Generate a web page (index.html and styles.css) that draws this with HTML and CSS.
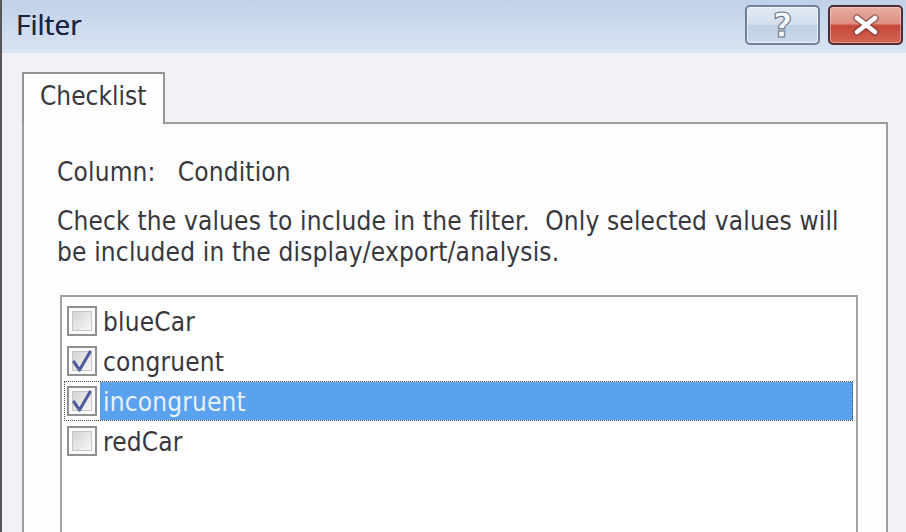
FILE: index.html
```html
<!DOCTYPE html>
<html>
<head>
<meta charset="utf-8">
<title>Filter</title>
<link rel="stylesheet" href="styles.css">
</head>
<body>
<div class="window">
  <div class="titlebar">
    <span class="title">Filter</span>
    <div class="caption-buttons">
      <div class="cbtn help"><span class="qmark">?</span></div>
      <div class="cbtn close">
        <svg width="36" height="24" viewBox="0 0 36 24">
          <path d="M9 5 L27 19 M27 5 L9 19" stroke="#5a3030" stroke-width="7.5" stroke-linecap="round" fill="none" opacity="0.5"/>
          <path d="M9 5 L27 19 M27 5 L9 19" stroke="#ffffff" stroke-width="4.6" stroke-linecap="round" fill="none"/>
        </svg>
      </div>
    </div>
  </div>
  <div class="client">
    <div class="tabstrip">
      <div class="tab">Checklist</div>
      <div class="tab-rest"></div>
    </div>
    <div class="panel">
      <div class="column-line"><span>Column:</span><span>Condition</span></div>
      <p class="hint">Check the values to include in the filter.&nbsp; Only selected values will<br>be included in the display/export/analysis.</p>
      <div class="listbox">
        <div class="item">
          <span class="cb"></span>
          <span class="label">blueCar</span>
        </div>
        <div class="item">
          <span class="cb"><svg class="tick" width="26" height="26" viewBox="0 0 26 26"><path d="M5 14 L10.5 22 L21 4" stroke="#4e5e9f" stroke-width="3.1" fill="none" stroke-linecap="round" stroke-linejoin="round"/></svg></span>
          <span class="label">congruent</span>
        </div>
        <div class="item focused">
          <span class="cb"><svg class="tick" width="26" height="26" viewBox="0 0 26 26"><path d="M5 14 L10.5 22 L21 4" stroke="#4e5e9f" stroke-width="3.1" fill="none" stroke-linecap="round" stroke-linejoin="round"/></svg></span>
          <span class="label selected">incongruent</span>
        </div>
        <div class="item">
          <span class="cb"></span>
          <span class="label">redCar</span>
        </div>
      </div>
    </div>
  </div>
</div>
</body>
</html>
```
FILE: styles.css
```css
html, body {
  margin: 0;
  padding: 0;
}

body {
  width: 906px;
  height: 532px;
  overflow: hidden;
  background: #f3f1f5;
  font-family: "DejaVu Sans Condensed", "DejaVu Sans", sans-serif;
  font-stretch: condensed;
  font-size: 26px;
  letter-spacing: 0.17px;
  color: #38383c;
}

.window {
  height: 532px;
  box-sizing: border-box;
  border-left: 2px solid #565656;
  display: flex;
  flex-direction: column;
}

.titlebar {
  height: 53px;
  flex: none;
  display: flex;
  align-items: flex-start;
  padding-left: 14px;
  background: linear-gradient(#c0d1e8, #d9e4f2);
}

.title {
  font-family: "Open Sans", "Noto Sans", sans-serif;
  font-stretch: normal;
  font-size: 28px;
  letter-spacing: 0;
  line-height: 48px;
  color: #1b2443;
  text-shadow: 0 0 0.5px #1b2443;
}

.caption-buttons {
  margin-left: auto;
  display: flex;
  gap: 8px;
  padding: 5px 3px 0 0;
}

.cbtn {
  width: 75px;
  height: 40px;
  box-sizing: border-box;
  border-radius: 5px;
  display: flex;
  align-items: center;
  justify-content: center;
}

.help {
  border: 2px solid #71809a;
  background: linear-gradient(#e2eaf5 0%, #d3deed 48%, #bfcfe4 52%, #cddaec 100%);
  box-shadow: inset 0 0 0 1px rgba(255, 255, 255, 0.6);
}

.qmark {
  font-family: "DejaVu Sans", sans-serif;
  font-stretch: normal;
  font-weight: bold;
  font-size: 34px;
  line-height: 36px;
  letter-spacing: 0;
  color: #f7f8fb;
  -webkit-text-stroke: 1px #6a7080;
}

.close {
  border: 2px solid #4c2d36;
  background: linear-gradient(#e9aea3 0%, #dc8f82 46%, #c5483a 52%, #d46553 100%);
  box-shadow: inset 0 0 0 1px rgba(255, 220, 210, 0.45);
}

.client {
  flex: 1;
  padding: 19px 18px 0 20px;
  min-height: 0;
}

.tabstrip {
  display: flex;
  height: 52px;
}

.tab {
  width: 143px;
  box-sizing: border-box;
  border: 2px solid #959595;
  border-bottom: none;
  background: #fdfdfe;
  padding: 7px 0 0 16px;
  line-height: 31px;
  letter-spacing: 0;
}

.tab-rest {
  flex: 1;
  border-bottom: 2px solid #9d9d9d;
}

.panel {
  height: 500px;
  box-sizing: border-box;
  border: 2px solid #9d9d9d;
  border-top: none;
  background: #fdfdfe;
  padding: 33px 28px 0 33px;
}

.column-line {
  display: flex;
  gap: 22px;
  line-height: 31px;
}

.hint {
  margin: 18px 0 0 0;
  line-height: 31px;
}

.listbox {
  margin: 27px 0 0 3px;
  height: 300px;
  box-sizing: border-box;
  border: 2px solid #a3a3a3;
  background: #ffffff;
  padding: 4px 3px 0 2px;
}

.item {
  height: 40px;
  display: flex;
  align-items: center;
  padding-left: 3px;
}

.item.focused {
  outline: 1px dotted #4a4a4a;
  outline-offset: -1px;
}

.cb {
  width: 30px;
  height: 30px;
  flex: none;
  box-sizing: border-box;
  border: 2px solid #8f9090;
  background: #fbfbfb;
  display: flex;
  align-items: center;
  justify-content: center;
  position: relative;
}

.cb::before {
  content: "";
  position: absolute;
  left: 3px;
  top: 3px;
  right: 3px;
  bottom: 3px;
  border: 1px solid #c6c6c6;
  background: linear-gradient(135deg, #d4d4d4, #f7f7f7);
}

.tick {
  position: relative;
}

.label {
  flex: 1;
  height: 38px;
  box-sizing: border-box;
  margin-left: 3px;
  padding: 3px 0 0 3px;
  line-height: 34px;
}

.label.selected {
  background: #5aa1ee;
  color: #e9f1ff;
}
```
